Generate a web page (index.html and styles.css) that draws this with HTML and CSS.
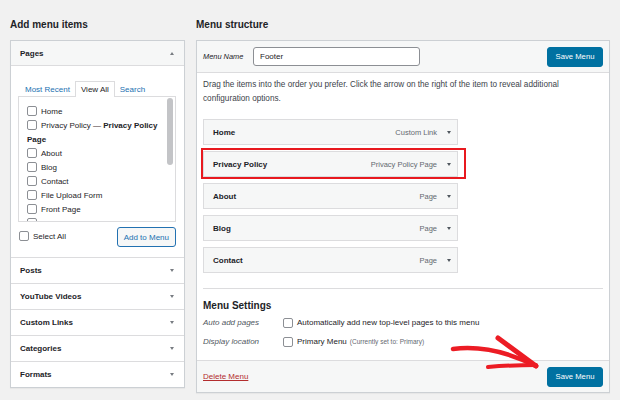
FILE: index.html
```html
<!DOCTYPE html>
<html>
<head>
<meta charset="utf-8">
<link rel="stylesheet" href="styles.css">
</head>
<body>
<div class="page">
  <div class="col-left">
    <h2 class="title">Add menu items</h2>
    <div class="box">
      <div class="sec-open">
        <div class="sec-head"><span>Pages</span><span class="tri up"></span></div>
        <div class="sec-body">
          <div class="tabs">
            <span class="tab link">Most Recent</span>
            <span class="tab active">View All</span>
            <span class="tab link">Search</span>
          </div>
          <div class="list">
            <div class="items">
              <div class="opt"><span class="cb"></span>Home</div>
              <div class="opt"><span class="cb"></span>Privacy Policy — <b>Privacy Policy<br>Page</b></div>
              <div class="opt"><span class="cb"></span>About</div>
              <div class="opt"><span class="cb"></span>Blog</div>
              <div class="opt"><span class="cb"></span>Contact</div>
              <div class="opt"><span class="cb"></span>File Upload Form</div>
              <div class="opt"><span class="cb"></span>Front Page</div>
              <div class="opt"><span class="cb"></span></div>
            </div>
            <div class="scroll"><div class="thumb"></div></div>
          </div>
          <div class="list-foot">
            <div class="opt"><span class="cb"></span>Select All</div>
            <button class="btn-sec">Add to Menu</button>
          </div>
        </div>
      </div>
      <div class="sec"><span>Posts</span><span class="tri down"></span></div>
      <div class="sec"><span>YouTube Videos</span><span class="tri down"></span></div>
      <div class="sec"><span>Custom Links</span><span class="tri down"></span></div>
      <div class="sec"><span>Categories</span><span class="tri down"></span></div>
      <div class="sec last"><span>Formats</span><span class="tri down"></span></div>
    </div>
  </div>

  <div class="col-right">
    <h2 class="title">Menu structure</h2>
    <div class="box">
      <div class="menu-head">
        <span class="name-label">Menu Name</span>
        <span class="name-input">Footer</span>
        <span class="spacer"></span>
        <button class="btn-primary">Save Menu</button>
      </div>
      <div class="menu-body">
        <p class="desc">Drag the items into the order you prefer. Click the arrow on the right of the item to reveal additional configuration options.</p>
        <div class="menu-items">
          <div class="mitem"><span class="mt">Home</span><span class="mtype">Custom Link</span><span class="tri down dark"></span></div>
          <div class="mitem hl"><span class="mt">Privacy Policy</span><span class="mtype">Privacy Policy Page</span><span class="tri down dark"></span></div>
          <div class="mitem"><span class="mt">About</span><span class="mtype">Page</span><span class="tri down dark"></span></div>
          <div class="mitem"><span class="mt">Blog</span><span class="mtype">Page</span><span class="tri down dark"></span></div>
          <div class="mitem"><span class="mt">Contact</span><span class="mtype">Page</span><span class="tri down dark"></span></div>
        </div>
        <div class="settings">
          <h3 class="set-title">Menu Settings</h3>
          <div class="set-row"><span class="set-label">Auto add pages</span><span class="cb"></span><span>Automatically add new top-level pages to this menu</span></div>
          <div class="set-row"><span class="set-label">Display location</span><span class="cb"></span><span>Primary Menu</span><span class="note">(Currently set to: Primary)</span></div>
        </div>
      </div>
      <div class="menu-foot">
        <span class="delete">Delete Menu</span>
        <button class="btn-primary">Save Menu</button>
      </div>
    </div>
  </div>
</div>

<svg class="arrow" width="110" height="50" viewBox="0 0 110 50">
  <path d="M13 19 Q 52 14 96 36" fill="none" stroke="#ec1c24" stroke-width="4.5" stroke-linecap="round"/>
  <path d="M58 8 L96 36" fill="none" stroke="#ec1c24" stroke-width="5" stroke-linecap="round"/>
  <path d="M48 37 Q 72 35 96 35" fill="none" stroke="#ec1c24" stroke-width="4" stroke-linecap="round"/>
</svg>
</body>
</html>
```

FILE: styles.css
```css
body {
  margin: 0;
  width: 620px;
  height: 400px;
  overflow: hidden;
  position: relative;
  background: #f1f1f1;
  font-family: "Liberation Sans", Arial, sans-serif;
  color: #1d2327;
}

.page {
  display: flex;
  align-items: flex-start;
  gap: 11px;
  padding: 0 10px;
}

.col-left { width: 175px; }
.col-right { width: 414px; }

.title {
  margin: 0;
  height: 40px;
  box-sizing: border-box;
  padding-top: 8px;
  display: flex;
  align-items: center;
  font-size: 10px;
  font-weight: bold;
  color: #1d2327;
}

.box {
  background: #fff;
  border: 1px solid #ccd0d4;
  box-shadow: 0 1px 1px rgba(0,0,0,0.04);
}

/* left column */
.sec-open { border-bottom: 1px solid #dcdcde; }

.sec-head {
  height: 24px;
  display: flex;
  align-items: center;
  justify-content: space-between;
  padding: 0 10px 0 9px;
  background: #f6f7f7;
  border-bottom: 1px solid #dcdcde;
  font-size: 8px;
  font-weight: bold;
}

.sec-body { padding: 15px 8px 10px 7px; }

.tabs {
  display: flex;
  gap: 5px;
  padding-left: 7px;
  height: 16px;
  margin-bottom: -1px;
  position: relative;
  z-index: 1;
}

.tab {
  display: flex;
  align-items: center;
  font-size: 8px;
}

.tab.link { color: #2271b1; }

.tab.active {
  padding: 0 5px;
  border: 1px solid #dcdcde;
  border-bottom: 0;
  background: #fff;
  color: #1d2327;
}

.list {
  height: 126px;
  box-sizing: border-box;
  border: 1px solid #dcdcde;
  display: flex;
}

.items {
  flex: 1;
  overflow: hidden;
  padding: 8px 0 0 8px;
}

.opt {
  font-size: 8px;
  line-height: 14px;
  color: #1d2327;
}

.cb {
  display: inline-block;
  width: 10px;
  height: 10px;
  box-sizing: border-box;
  border: 1px solid #8c8f94;
  border-radius: 2px;
  background: #fff;
  vertical-align: middle;
  margin: -2px 4px 0 0;
}

.scroll {
  width: 6px;
  margin: 1px 2px 0 0;
}

.thumb {
  height: 67px;
  border-radius: 3px;
  background: #c3c4c7;
}

.list-foot {
  display: flex;
  align-items: center;
  justify-content: space-between;
  padding: 5px 0 0 1px;
}

.btn-sec {
  height: 20px;
  padding: 0 6px;
  border: 1px solid #2271b1;
  border-radius: 3px;
  background: #f6f7f7;
  color: #2271b1;
  font-family: inherit;
  font-size: 8px;
}

.sec {
  height: 25px;
  display: flex;
  align-items: center;
  justify-content: space-between;
  padding: 0 10px 0 9px;
  border-bottom: 1px solid #dcdcde;
  font-size: 8px;
  font-weight: bold;
}

.sec.last { border-bottom: 0; }

.tri {
  width: 0;
  height: 0;
  border-left: 2.5px solid transparent;
  border-right: 2.5px solid transparent;
}

.tri.down { border-top: 3.5px solid #787c82; }
.tri.up { border-bottom: 3.5px solid #787c82; }
.tri.dark { border-top-color: #50575e; }

/* right column */
.menu-head {
  height: 31px;
  display: flex;
  align-items: center;
  padding: 0 6px;
  background: #f6f7f7;
  border-bottom: 1px solid #dcdcde;
}

.name-label {
  width: 50px;
  font-size: 7.4px;
  font-style: italic;
  color: #1d2327;
}

.name-input {
  width: 167px;
  height: 19px;
  box-sizing: border-box;
  border: 1px solid #8c8f94;
  border-radius: 3px;
  background: #fff;
  display: flex;
  align-items: center;
  padding-left: 6px;
  font-size: 8px;
}

.spacer { flex: 1; }

.btn-primary {
  height: 20px;
  width: 56px;
  padding: 0;
  border: 1px solid #0071a1;
  border-radius: 3px;
  background: #0071a1;
  color: #fff;
  font-family: inherit;
  font-size: 7.7px;
}

.menu-body { padding: 5px 6px 9px 6px; }

.desc {
  margin: 0 0 13px;
  font-size: 8.2px;
  line-height: 14px;
  color: #3c434a;
}

.menu-items {
  display: flex;
  flex-direction: column;
  gap: 6px;
}

.mitem {
  width: 255px;
  height: 26px;
  box-sizing: border-box;
  display: flex;
  align-items: center;
  padding: 0 6px 0 9px;
  border: 1px solid #dcdcde;
  background: #f6f7f7;
}

.mitem.hl { position: relative; }

.mitem.hl::after {
  content: "";
  position: absolute;
  left: -3px;
  top: -4px;
  width: 265px;
  height: 31px;
  box-sizing: border-box;
  border: 2px solid #e8191f;
}

.mt {
  flex: 1;
  font-size: 8px;
  font-weight: bold;
}

.mtype {
  font-size: 7.5px;
  color: #646970;
  margin-right: 10px;
}

.settings {
  margin-top: 15px;
  border-top: 1px solid #dcdcde;
  padding-top: 10px;
}

.set-title {
  margin: 0;
  font-size: 10px;
  line-height: 14px;
  font-weight: bold;
}

.set-row {
  height: 19px;
  display: flex;
  align-items: center;
  font-size: 8px;
  color: #1d2327;
}

.set-row .cb { margin: 0 4px 0 0; }

.set-label {
  width: 80px;
  font-style: italic;
  color: #50575e;
}

.note {
  margin-left: 3px;
  font-size: 6.5px;
  color: #646970;
}

.menu-foot {
  height: 31px;
  display: flex;
  align-items: center;
  justify-content: space-between;
  padding: 0 6px;
  background: #f6f7f7;
  border-top: 1px solid #dcdcde;
}

.delete {
  font-size: 8px;
  color: #b32d2e;
  text-decoration: underline;
}

.arrow {
  position: absolute;
  left: 440px;
  top: 330px;
}
```
